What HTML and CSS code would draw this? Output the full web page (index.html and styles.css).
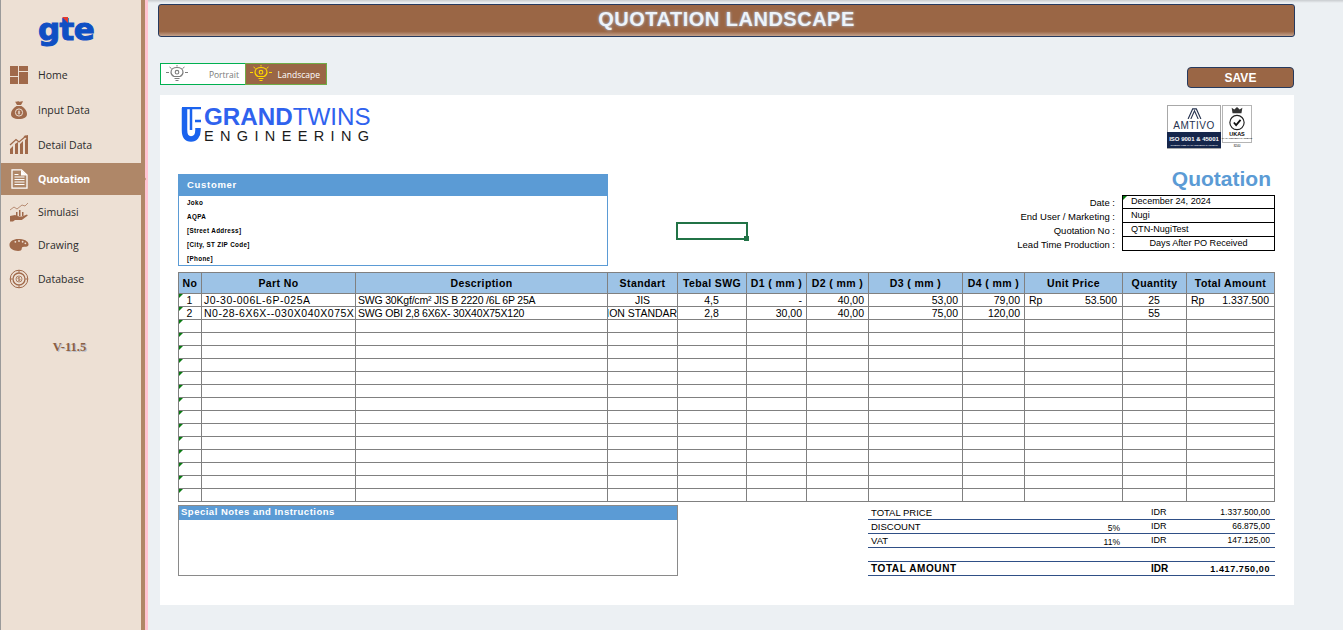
FILE: index.html
```html
<!DOCTYPE html>
<html lang="en">
<head>
<meta charset="utf-8">
<title>Quotation Landscape</title>
<link rel="stylesheet" href="styles.css">
</head>
<body>
<div class="app">
  <aside class="sidebar">
    <div class="brand"><span class="brand-text">gte</span><span class="brand-mark"></span></div>
    <nav class="nav">
      <a class="nav-item">
        <svg class="nav-icon" viewBox="0 0 20 20"><path class="fill" d="M1 1h8v10H1zM10 1h9v5h-9zM1 12h8v7H1zM10 7h9v12h-9z"/></svg>
        <span>Home</span>
      </a>
      <a class="nav-item">
        <svg class="nav-icon" viewBox="0 0 20 20"><path class="fill" d="M6 1.500c1.500.8 2.500-.6 4 0s2.500-.6 4 0l-2 3.500H8zM7.500 6h5c3.500 2 5.500 5 5.500 8 0 3.500-3 5-8 5s-8-1.500-8-5c0-3 2-6 5.500-8z"/><circle cx="10" cy="12.500" r="3.600" fill="none" stroke="#ede0d4" stroke-width="1"/><path d="M10 10.500v4M11.200 11.300h-1.800v1.200h1.300v1.200h-1.900" fill="none" stroke="#ede0d4" stroke-width=".7"/></svg>
        <span>Input Data</span>
      </a>
      <a class="nav-item">
        <svg class="nav-icon" viewBox="0 0 20 20"><path class="fill" d="M1 14l3-3v8H1zM6 9l3-2v12H6zM11 9l3-3v13h-3zM16 5l3-3v17h-3z"/><path d="M1 10L7 4.500l3 2.500 7-6" fill="none" stroke="#a0694a" stroke-width="1.300"/><path class="fill" d="M19 0v5l-4.500-4z"/></svg>
        <span>Detail Data</span>
      </a>
      <a class="nav-item nav-item-active">
        <svg class="nav-icon" viewBox="0 0 20 20"><path d="M3 .8h9.500L18 6v13.200H3z" fill="none" stroke="#fff" stroke-width="1.300"/><path d="M12 1v5.500h6z" fill="#fff"/><path d="M5.500 8h10M5.500 10.500h10M5.500 13h10M5.500 15.500h10M5.500 5.500h4" stroke="#fff" stroke-width="1"/></svg>
        <span>Quotation</span>
      </a>
      <a class="nav-item">
        <svg class="nav-icon" viewBox="0 0 20 20"><path d="M1 8l4-3 3 2 5-4 3 1 3-3" fill="none" stroke="#a0694a" stroke-width=".7"/><path class="fill" d="M7 10h1.500v4H7zM10 8h1.500v6H10zM13 10h1.500v4H13z"/><path class="fill" d="M1 14l5-1 4 1.500 3 0 5-2 .800 1-6 4.500H6l-2 1.500H1z"/></svg>
        <span>Simulasi</span>
      </a>
      <a class="nav-item">
        <svg class="nav-icon nav-icon-wide" viewBox="0 0 22 14"><path class="fill" d="M10 .5c6 0 11.500 2 11.500 6 0 2.500-3 2.500-5 2.500-2 0-2.500 1-2.500 2 0 1.500-1.500 2.500-4 2.500C5 13.500.5 11 .5 7 .5 3 5 .5 10 .5z"/><g fill="#ede0d4"><circle cx="7" cy="3.500" r="1"/><circle cx="11" cy="2.600" r="1"/><circle cx="15" cy="3.400" r="1"/><circle cx="18" cy="5.200" r="1"/></g></svg>
        <span>Drawing</span>
      </a>
      <a class="nav-item">
        <svg class="nav-icon" viewBox="0 0 20 20"><g fill="none" stroke="#a0694a"><circle cx="10" cy="10" r="8.800" stroke-width="1"/><circle cx="10" cy="10" r="6" stroke-width="1.300"/><circle cx="10" cy="10" r="3" stroke-width=".8"/><path d="M10 1v2.500M10 16.500V19M1 10h2.500M16.500 10H19" stroke-width="1"/><path d="M11 8.700H9v1.300h2v1.300H9" stroke-width=".8"/></g></svg>
        <span>Database</span>
      </a>
    </nav>
    <div class="version">V-11.5</div>
    <span class="nav-pointer"></span>
  </aside>
  <div class="edge"></div>

  <main class="main">
    <h1 class="title">QUOTATION LANDSCAPE</h1>
    <div class="controls">
      <div class="tabs">
        <div class="tab tab-off">
          <svg class="bulb" viewBox="0 0 22 18"><g fill="none" stroke="#7d7d7d"><path d="M8 11.500C6 10.500 5 9 5 7.200 5 4.500 7.500 2.500 11 2.500s6 2 6 4.700c0 1.800-1 3.300-3 4.300z" stroke-width="1.200"/><circle cx="11" cy="7.200" r="1.800" stroke-width="1.100"/><path d="M8.500 13.500h5M9.500 15.500h3M0 7.500h3M19 7.500h3M3.500 2l2 1.500M18.500 2l-2 1.500M11 0v1.500" stroke-width="1"/></g></svg>
          <span>Portrait</span>
        </div>
        <div class="tab tab-on">
          <svg class="bulb" viewBox="0 0 22 18"><g fill="none" stroke="#ffd800"><path d="M8 11.500C6 10.500 5 9 5 7.200 5 4.500 7.500 2.500 11 2.500s6 2 6 4.700c0 1.800-1 3.300-3 4.300z" stroke-width="1.200"/><circle cx="11" cy="7.200" r="1.800" stroke-width="1.100"/><path d="M8.500 13.500h5M9.500 15.500h3M0 7.500h3M19 7.500h3M3.500 2l2 1.500M18.500 2l-2 1.500M11 0v1.500" stroke-width="1"/></g></svg>
          <span>Landscape</span>
        </div>
      </div>
      <button class="save">SAVE</button>
    </div>

    <section class="sheet">
      <div class="sheet-head">
        <div class="logo">
          <svg class="logo-mark" viewBox="0 0 20 35"><path d="M3.500 1v22c0 6 2.500 9 6.500 9s7-3 7-9v-2" fill="none" stroke="#1a63ee" stroke-width="5.500"/><path d="M10 1v22" stroke="#1a63ee" stroke-width="2.500"/><path d="M1 1h19M14 14h6" stroke="#1a63ee" stroke-width="2.500"/></svg>
          <div class="logo-words">
            <div class="logo-top"><b>GRAND</b>TWINS</div>
            <div class="logo-bottom">ENGINEERING</div>
          </div>
        </div>
        <div class="certs">
          <div class="amtivo">
            <svg class="amtivo-mark" viewBox="0 0 16 12"><path d="M1 12L6 1h4l5 11M4 12L8 3l4 9" fill="none" stroke="#25324f" stroke-width="1.200"/></svg>
            <div class="amtivo-name">AMTIVO</div>
            <div class="amtivo-bar"><span class="amtivo-iso">ISO 9001 &amp; 45001</span><span class="amtivo-sub">INTEGRATED MANAGEMENT SYSTEMS</span></div>
          </div>
          <div class="ukas-wrap">
            <div class="ukas">
              <svg class="ukas-mark" viewBox="0 0 20 28"><path d="M5 8L4 2l3 2 3-3 3 3 3-2-1 6z" fill="#333"/><circle cx="10" cy="18.500" r="8" fill="none" stroke="#222" stroke-width="1.300"/><path d="M6.500 18.500l2.500 3 5-6" fill="none" stroke="#111" stroke-width="2"/></svg>
              <div class="ukas-name">UKAS</div>
              <div class="ukas-sub">MANAGEMENT SYSTEMS</div>
            </div>
            <div class="ukas-code">8240</div>
          </div>
        </div>
      </div>

      <div class="sheet-info">
        <div class="customer">
          <div class="customer-head">Customer</div>
          <div class="customer-line">Joko</div>
          <div class="customer-line">AQPA</div>
          <div class="customer-line">[Street Address]</div>
          <div class="customer-line">[City, ST ZIP Code]</div>
          <div class="customer-line">[Phone]</div>
        </div>
        <div class="quote">
          <div class="quote-title">Quotation</div>
          <div class="quote-grid">
            <div class="quote-label">Date :</div><div class="quote-value quote-flag">December 24, 2024</div>
            <div class="quote-label">End User / Marketing :</div><div class="quote-value">Nugi</div>
            <div class="quote-label">Quotation No :</div><div class="quote-value">QTN-NugiTest</div>
            <div class="quote-label">Lead Time Production :</div><div class="quote-value quote-center">Days After PO Received</div>
          </div>
        </div>
      </div>

      <table class="items">
        <colgroup>
          <col class="c-no"><col class="c-part"><col class="c-desc"><col class="c-std"><col class="c-swg"><col class="c-d1"><col class="c-d2"><col class="c-d3"><col class="c-d4"><col class="c-price"><col class="c-qty"><col class="c-total">
        </colgroup>
        <thead>
          <tr><th>No</th><th>Part No</th><th>Description</th><th>Standart</th><th>Tebal SWG</th><th>D1 ( mm )</th><th>D2 ( mm )</th><th>D3 ( mm )</th><th>D4 ( mm )</th><th>Unit Price</th><th>Quantity</th><th>Total Amount</th></tr>
        </thead>
        <tbody>
          <tr><td class="no">1</td><td class="part">J0-30-006L-6P-025A</td><td class="desc">SWG 30Kgf/cm² JIS B 2220 /6L 6P 25A</td><td class="mid"><span class="clip">JIS</span></td><td class="mid">4,5</td><td class="num">-</td><td class="num">40,00</td><td class="num">53,00</td><td class="num">79,00</td><td><span class="money"><span>Rp</span><span>53.500</span></span></td><td class="mid">25</td><td><span class="money"><span>Rp</span><span>1.337.500</span></span></td></tr>
          <tr><td class="no">2</td><td class="part">N0-28-6X6X--030X040X075X120</td><td class="desc">SWG OBI 2,8 6X6X- 30X40X75X120</td><td class="mid"><span class="clip">NON STANDART</span></td><td class="mid">2,8</td><td class="num">30,00</td><td class="num">40,00</td><td class="num">75,00</td><td class="num">120,00</td><td></td><td class="mid">55</td><td></td></tr>
          <tr><td class="no"></td><td></td><td></td><td></td><td></td><td></td><td></td><td></td><td></td><td></td><td></td><td></td></tr>
          <tr><td class="no"></td><td></td><td></td><td></td><td></td><td></td><td></td><td></td><td></td><td></td><td></td><td></td></tr>
          <tr><td class="no"></td><td></td><td></td><td></td><td></td><td></td><td></td><td></td><td></td><td></td><td></td><td></td></tr>
          <tr><td class="no"></td><td></td><td></td><td></td><td></td><td></td><td></td><td></td><td></td><td></td><td></td><td></td></tr>
          <tr><td class="no"></td><td></td><td></td><td></td><td></td><td></td><td></td><td></td><td></td><td></td><td></td><td></td></tr>
          <tr><td class="no"></td><td></td><td></td><td></td><td></td><td></td><td></td><td></td><td></td><td></td><td></td><td></td></tr>
          <tr><td class="no"></td><td></td><td></td><td></td><td></td><td></td><td></td><td></td><td></td><td></td><td></td><td></td></tr>
          <tr><td class="no"></td><td></td><td></td><td></td><td></td><td></td><td></td><td></td><td></td><td></td><td></td><td></td></tr>
          <tr><td class="no"></td><td></td><td></td><td></td><td></td><td></td><td></td><td></td><td></td><td></td><td></td><td></td></tr>
          <tr><td class="no"></td><td></td><td></td><td></td><td></td><td></td><td></td><td></td><td></td><td></td><td></td><td></td></tr>
          <tr><td class="no"></td><td></td><td></td><td></td><td></td><td></td><td></td><td></td><td></td><td></td><td></td><td></td></tr>
          <tr><td class="no"></td><td></td><td></td><td></td><td></td><td></td><td></td><td></td><td></td><td></td><td></td><td></td></tr>
          <tr><td class="no"></td><td></td><td></td><td></td><td></td><td></td><td></td><td></td><td></td><td></td><td></td><td></td></tr>
          <tr><td class="no"></td><td></td><td></td><td></td><td></td><td></td><td></td><td></td><td></td><td></td><td></td><td></td></tr>
        </tbody>
      </table>

      <div class="sheet-foot">
        <div class="notes">
          <div class="notes-head">Special Notes and Instructions</div>
        </div>
        <div class="totals">
          <div class="total-row"><span>TOTAL PRICE</span><span></span><span class="total-cur">IDR</span><span class="total-num">1.337.500,00</span></div>
          <div class="total-row"><span>DISCOUNT</span><span class="total-pct">5%</span><span class="total-cur">IDR</span><span class="total-num">66.875,00</span></div>
          <div class="total-row"><span>VAT</span><span class="total-pct">11%</span><span class="total-cur">IDR</span><span class="total-num">147.125,00</span></div>
          <div class="total-row"></div>
          <div class="total-row total-grand"><span>TOTAL AMOUNT</span><span></span><span class="total-cur">IDR</span><span class="total-num">1.417.750,00</span></div>
        </div>
      </div>

      <div class="selection"></div>
    </section>
  </main>
</div>
</body>
</html>
```
FILE: styles.css
```css
* { box-sizing: border-box; }
html, body { margin: 0; height: 100%; overflow: hidden; }
body { font-family: "Liberation Sans", Arial, sans-serif; background: #ecf0f3; color: #000; }
.app { display: flex; height: 630px; width: 1343px; }

/* sidebar */
.sidebar {
  position: relative;
  flex: 0 0 145px;
  background: #ede0d4;
  border-left: 1px solid #9a9a9a;
  border-right: 4px solid #af8768;
  display: flex;
  flex-direction: column;
  font-family: "Open Sans", sans-serif;
}
.edge { flex: 0 0 3px; background: #ffc4d2; }
.brand { position: relative; height: 57px; padding-left: 37px; }
.brand-text {
  display: block;
  font-family: "DejaVu Sans", sans-serif;
  font-weight: 700;
  font-size: 31px;
  line-height: 1;
  letter-spacing: -.6px;
  color: #0f4fc4;
  margin-top: 14px;
  -webkit-text-stroke: 1px #0f4fc4;
}
.brand-mark {
  position: absolute;
  left: 61px;
  top: 17px;
  width: 0;
  height: 0;
  border-top: 6px solid #e33a30;
  border-left: 6px solid transparent;
}
.nav { display: grid; grid-template-rows: 36px 34px 36px 32px 34px 32px 35px; }
.nav-item { display: flex; align-items: center; gap: 9px; padding-left: 8px; font-size: 10.500px; color: #2b2b2b; }
.nav-item-active { background: #af8768; color: #fff; font-weight: 700; letter-spacing: -.2px; }
.nav-icon { width: 20px; height: 20px; flex: none; }
.nav-icon-wide { height: 14px; }
.fill { fill: #a0694a; }
.nav-pointer {
  position: absolute;
  left: 140px;
  top: 172px;
  width: 0;
  height: 0;
  border-left: 5px solid #af8768;
  border-top: 7px solid transparent;
  border-bottom: 7px solid transparent;
}
.version {
  margin-top: 44px;
  padding-right: 3px;
  text-align: center;
  font-family: "Liberation Serif", serif;
  font-weight: 700;
  font-size: 12.500px;
  color: #8c5f42;
  text-shadow: 1px 1px 0 #b9bfcb;
}

/* main column */
.main { flex: 1; min-width: 0; padding: 4px 0 0 10px; background: linear-gradient(#c9cccf, #ecf0f3 3px); position: relative; }
.title {
  margin: 0;
  width: 1137px;
  height: 33px;
  background: linear-gradient(#9a6645 85%, #c4a28c);
  border: 1px solid #263a5e;
  border-radius: 3px;
  color: #eef3f9;
  font-size: 20px;
  font-weight: 700;
  line-height: 29px;
  text-align: center;
  letter-spacing: .5px;
  text-shadow: 0 0 3px #a9c8ea;
}
.controls { display: flex; justify-content: space-between; margin: 26px 0 0 2px; width: 1134px; height: 32px; }
.tabs { display: flex; height: 22px; font-family: "Open Sans", sans-serif; font-size: 8.500px; }
.tab { display: flex; align-items: center; justify-content: space-between; }
.tab-off { width: 85px; background: #fff; border: 1px solid #00b050; border-right: 0; color: #7a7a7a; padding: 0 6px 0 5px; }
.tab-on { width: 82px; background: #9a6645; border: 1px solid #70ad47; color: #fff; padding: 0 6px 0 4px; }
.bulb { width: 22px; height: 18px; }
.save {
  margin: 4px 0 0;
  width: 107px;
  height: 21px;
  padding: 0;
  background: #9a6645;
  border: 1px solid #263a5e;
  border-radius: 4px;
  color: #fff;
  font-family: "Liberation Sans", sans-serif;
  font-weight: 700;
  font-size: 12px;
}

/* sheet */
.sheet { position: relative; margin-left: 2px; width: 1134px; height: 510px; background: #fff; padding: 0 19px 0 18px; }
.sheet-head { display: flex; justify-content: space-between; height: 73px; padding: 10px 23px 0 3px; }
.logo { display: flex; gap: 3px; height: 36px; }
.logo-mark { width: 20px; height: 35px; margin-top: 2px; }
.logo-top { font-size: 24.200px; line-height: 23px; color: #2f62ee; white-space: nowrap; }
.logo-bottom { font-size: 14.500px; line-height: 14px; letter-spacing: 6.350px; color: #1b1b1b; margin-top: 1px; white-space: nowrap; }
.certs { display: flex; gap: 1px; align-items: flex-start; }
.amtivo { width: 54px; height: 44px; border: 1px solid #a8a8a8; display: flex; flex-direction: column; align-items: center; }
.amtivo-mark { width: 15px; height: 11px; margin-top: 2px; }
.amtivo-name { font-size: 10px; line-height: 11px; letter-spacing: .5px; color: #25324f; margin-top: 1px; }
.amtivo-bar { width: 54px; flex: 1; margin-top: 1px; background: #15264b; color: #fff; display: flex; flex-direction: column; align-items: center; }
.amtivo-iso { font-size: 6px; line-height: 10px; font-weight: 700; margin-top: 2px; white-space: nowrap; }
.amtivo-sub { font-size: 2.500px; line-height: 4px; white-space: nowrap; }
.ukas-wrap { width: 30px; }
.ukas { height: 38px; border: 1px solid #b5b5b5; display: flex; flex-direction: column; align-items: center; }
.ukas-mark { width: 18px; height: 25px; margin-top: 0; }
.ukas-name { font-size: 5.500px; line-height: 6px; font-weight: 700; }
.ukas-sub { font-size: 2.500px; line-height: 3px; white-space: nowrap; }
.ukas-code { font-size: 3px; line-height: 6px; text-align: center; }

.sheet-info { display: flex; justify-content: space-between; height: 98px; }
.customer { width: 430px; height: 92px; margin-top: 6px; border: 1px solid #5b9bd5; }
.customer-head { height: 21px; margin: 0 -1px; background: #5b9bd5; color: #fff; font-weight: 700; font-size: 9.500px; letter-spacing: .7px; line-height: 20px; padding-left: 9px; }
.customer-line { height: 14px; line-height: 13px; font-size: 6.300px; font-weight: 700; letter-spacing: .35px; padding-left: 8px; }
.quote { display: flex; flex-direction: column; align-items: flex-end; }
.quote-title { height: 27px; line-height: 21px; font-size: 21px; font-weight: 700; color: #5b9bd5; padding-right: 4px; }
.quote-grid { display: grid; grid-template-columns: auto 153px; grid-auto-rows: 14px; column-gap: 7px; }
.quote-label { font-size: 9.500px; line-height: 15px; text-align: right; }
.quote-value { position: relative; border: 1px solid #000; border-top-width: 0; font-size: 9.100px; line-height: 13px; padding-left: 8px; }
.quote-flag { border-top-width: 1px; line-height: 11px; }
.quote-center { text-align: center; padding-left: 0; }
.quote-flag::before {
  content: "";
  position: absolute;
  left: 0;
  top: 0;
  border-top: 4px solid #0a7a12;
  border-right: 4px solid transparent;
}

/* item table */
.items { border-collapse: collapse; table-layout: fixed; width: 1097px; margin-top: 6px; font-size: 10.500px; }
.c-no { width: 23px; } .c-part { width: 154px; } .c-desc { width: 252px; } .c-std { width: 70px; }
.c-swg { width: 69px; } .c-d1 { width: 60px; } .c-d2 { width: 62px; } .c-d3 { width: 94px; }
.c-d4 { width: 62px; } .c-price { width: 98px; } .c-qty { width: 64px; } .c-total { width: 88px; }
.items th {
  height: 21px;
  padding: 0;
  border: 1px solid #808080;
  background: #9dc3e6;
  font-size: 10.500px;
  font-weight: 700;
  letter-spacing: .4px;
  white-space: nowrap;
}
.items td {
  position: relative;
  height: 13px;
  padding: 0 3px 0 2px;
  border: 1px solid #808080;
  line-height: 11px;
  white-space: nowrap;
  overflow: hidden;
}
.items .part { letter-spacing: .5px; }
.items .desc { letter-spacing: -.2px; }
.items .no { text-align: center; }
.no::before {
  content: "";
  position: absolute;
  left: 0;
  top: 0;
  border-top: 4px solid #0a7a12;
  border-right: 4px solid transparent;
}
.items .mid { text-align: center; }
.items .num { text-align: right; padding-right: 4px; }
.items td:has(.clip) { padding: 0; }
.clip { display: flex; justify-content: center; overflow: hidden; }
.money { display: flex; justify-content: space-between; padding: 0 2px 0 2px; }

/* footer */
.sheet-foot { display: flex; justify-content: space-between; margin-top: 3px; }
.notes { width: 500px; height: 71px; border: 1px solid #8a8a8a; }
.notes-head { height: 14px; background: #5b9bd5; color: #fff; font-size: 9.500px; font-weight: 700; letter-spacing: .5px; line-height: 12px; padding-left: 2px; }
.totals { width: 407px; padding-top: 1px; }
.total-row {
  display: grid;
  grid-template-columns: 236px 13px 70px 1fr;
  height: 14px;
  border-bottom: 1px solid #2f4f86;
  padding: 0 5px 0 3px;
  font-size: 9.500px;
  line-height: 13px;
}
.total-pct { font-size: 8.500px; line-height: 17px; display: flex; justify-content: flex-end; white-space: nowrap; }
.total-cur { padding-left: 31px; font-size: 9px; }
.total-num { text-align: right; font-size: 8.500px; white-space: nowrap; }
.total-grand { font-weight: 700; font-size: 10px; letter-spacing: .6px; line-height: 14px; }
.total-grand .total-num { font-size: 9px; }
.total-grand .total-cur { font-size: 10px; letter-spacing: 0; }

.selection {
  position: absolute;
  left: 516px;
  top: 127px;
  width: 72px;
  height: 18px;
  border: 2px solid #217346;
}
.selection::after {
  content: "";
  position: absolute;
  right: -3px;
  bottom: -3px;
  width: 5px;
  height: 5px;
  background: #217346;
}
```
